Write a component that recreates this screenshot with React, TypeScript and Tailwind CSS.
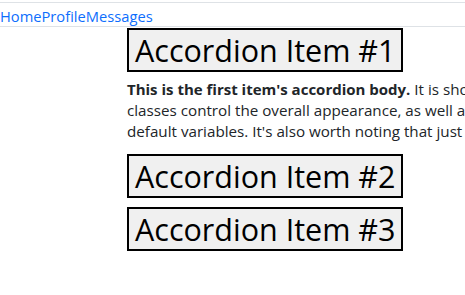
export default function App() {
  const btn =
    "block border-2 border-black bg-[#f0f0f0] px-[6px] py-px text-[30.5px] leading-[38px] text-black text-left";
  return (
    <div className="w-[465px] h-[295px] overflow-hidden bg-white" style={{ fontFamily: '"Open Sans", sans-serif' }}>
      <div className="mt-[2px] h-[25px] border-t border-b border-[#dee2e6] flex items-center">
        <nav className="flex text-[14.7px] leading-[20px] text-[#0d6efd] pt-[2px]">
          <span>Home</span>
          <span>Profile</span>
          <span>Messages</span>
        </nav>
      </div>
      <div className="pl-[127px] pt-px">
        <button className={btn}>Accordion Item #1</button>
        <div className="mt-[7px] text-[15.2px] leading-[21px] text-[#212529] whitespace-nowrap">
          <div>
            <strong className="font-bold text-[15px]">This is the first item's accordion body.</strong> It is shown by default, until the collapse plugin adds the appropriate classes that we use to style each element. These
          </div>
          <div>
            classes control the overall appearance, as well as the showing and hiding via CSS transitions. You can modify any of this with custom CSS or overriding our
          </div>
          <div>
            default variables. It's also worth noting that just about any HTML can go within the <code className="text-[#d63384]">.accordion-body</code>, though the transition does limit overflow.
          </div>
        </div>
        <button className={btn + " mt-[10px]"}>Accordion Item #2</button>
        <button className={btn + " mt-[9px]"}>Accordion Item #3</button>
      </div>
    </div>
  );
}
